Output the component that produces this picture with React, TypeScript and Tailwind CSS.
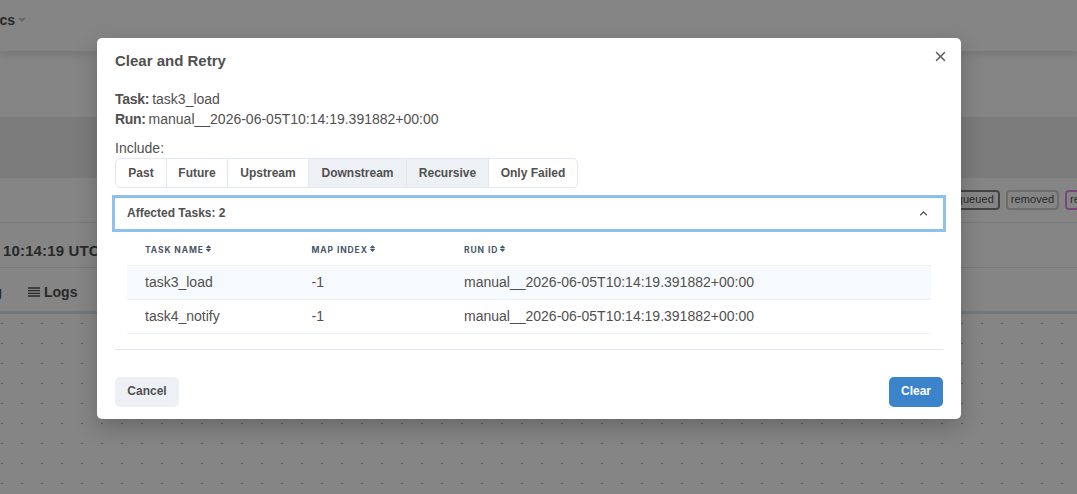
import React, { useState } from "react";
import { MdReorder } from "react-icons/md";
import { TiArrowUnsorted } from "react-icons/ti";
import clsx from "clsx";

const runId = "manual__2026-06-05T10:14:19.391882+00:00";

const tasks = [
  { name: "task3_load", mapIndex: -1, runId },
  { name: "task4_notify", mapIndex: -1, runId },
];

const options = [
  { label: "Past", width: "w-[50px]" },
  { label: "Future", width: "w-[61px]" },
  { label: "Upstream", width: "w-[81px]" },
  { label: "Downstream", width: "w-[98px]" },
  { label: "Recursive", width: "w-[82px]" },
  { label: "Only Failed", width: "w-[89px]" },
];

const CloseIcon: React.FC<{}> = () => (
  <svg
    viewBox="0 0 24 24"
    className="w-[9px] h-[9px] overflow-visible"
    fill="currentColor"
    stroke="currentColor"
  >
    <path d="M.439,21.44a1.5,1.5,0,0,0,2.122,2.121L11.823,14.3a.25.25,0,0,1,.354,0l9.262,9.263a1.5,1.5,0,1,0,2.122-2.121L14.3,12.177a.25.25,0,0,1,0-.354l9.263-9.262A1.5,1.5,0,0,0,21.439.44L12.177,9.7a.25.25,0,0,1-.354,0L2.561.44A1.5,1.5,0,0,0,.439,2.561L9.7,11.823a.25.25,0,0,1,0,.354Z" />
  </svg>
);

const ChevronIcon: React.FC<{ open: boolean }> = ({ open }) => (
  <svg
    viewBox="0 0 24 24"
    className={clsx("w-[15px] h-[15px]", open && "rotate-180")}
    fill="currentColor"
  >
    <path d="M16.59 8.59L12 13.17 7.41 8.59 6 10l6 6 6-6z" />
  </svg>
);

const Page: React.FC<{}> = () => (
  <div className="flex flex-col h-full text-[#51504f]">
    <div className="flex items-center h-[51px] shrink-0 pb-[11px] font-bold text-sm shadow-[0_1px_10px_2px_rgba(0,0,0,0.13)]">
      <span className="w-[15px] flex justify-end whitespace-nowrap">Docs</span>
      <span className="ml-[3px] border-x-4 border-t-4 border-x-transparent border-t-[#cbc3cf]" />
    </div>
    <div className="h-[66px] shrink-0" />
    <div className="h-[61px] shrink-0 bg-[#edecec]" />
    <div className="flex items-start justify-end h-[45px] shrink-0 pt-3 border-b border-[#e2e8f0]">
      <div className="flex w-[130px] gap-1.5 text-[11px] leading-[15px] tracking-[0.1px]">
        <span className="flex justify-end w-[53px] shrink-0 h-5 px-1 border-2 border-[#808080] rounded">
          queued
        </span>
        <span className="flex justify-center w-[53px] shrink-0 h-5 border-2 border-[#d3d3d3] rounded">
          removed
        </span>
        <span className="shrink-0 h-5 px-[3px] border-2 border-[#ee82ee] rounded">
          restarting
        </span>
      </div>
    </div>
    <div className="flex items-center h-[45px] shrink-0 pt-3 pl-[3px] border-b border-[#e2e8f0] text-[15px] font-bold tracking-[0.15px]">
      10:14:19 UTC
    </div>
    <div className="flex items-center h-[46px] shrink-0 pt-1 border-b-[3px] border-[#dbe5ee] text-sm font-bold">
      <span className="w-0.5 flex justify-end">Log</span>
      <MdReorder className="w-4 h-4 ml-6" />
      <span className="ml-0.5">Logs</span>
    </div>
    <svg className="w-full grow">
      <pattern
        id="dots"
        x="1"
        y="9"
        width="20"
        height="20"
        patternUnits="userSpaceOnUse"
      >
        <rect width="2" height="1" fill="#b0b0b0" />
      </pattern>
      <rect width="100%" height="100%" fill="url(#dots)" />
    </svg>
  </div>
);

const TaskTable: React.FC<{}> = () => (
  <div className="mx-3 text-sm">
    <div className="grid grid-cols-[166.5px_152.5px_1fr] items-center h-[37px] pt-1.5 px-[18px] border-b border-[#edf2f7] font-['Inter',sans-serif] text-[8.5px] font-bold tracking-[0.9px] text-[#4a5568]">
      {["TASK NAME", "MAP INDEX", "RUN ID"].map((title) => (
        <div key={title} className="flex items-center">
          {title}
          <TiArrowUnsorted className="w-[9px] h-[9px] mb-0.5" />
        </div>
      ))}
    </div>
    {tasks.map((task, i) => (
      <div
        key={task.name}
        className={clsx(
          "grid grid-cols-[166.5px_152.5px_1fr] items-center h-[34px] pb-px px-[18px] border-b border-[#edf2f7]",
          i % 2 === 0 && "bg-[#f7fafc]"
        )}
      >
        <span>{task.name}</span>
        <span>{task.mapIndex}</span>
        <span>{task.runId}</span>
      </div>
    ))}
  </div>
);

const ClearModal: React.FC<{}> = () => {
  const [selected, setSelected] = useState(["Downstream", "Recursive"]);
  const [open, setOpen] = useState(true);

  const toggle = (option: string) =>
    setSelected(
      selected.includes(option)
        ? selected.filter((item) => item !== option)
        : [...selected, option]
    );

  return (
    <div className="relative flex flex-col w-[864px] h-[381px] px-[18px] bg-white rounded-[5px] text-sm leading-5 text-[#51504f] shadow-[0_8px_22px_rgba(0,0,0,0.22)]">
      <div className="pt-[13px] text-[15px] font-bold">Clear and Retry</div>
      <button className="absolute top-[14px] right-4">
        <CloseIcon />
      </button>
      <div className="mt-[18px]">
        <b className="-mr-px tracking-[-0.25px]">Task:</b> task3_load
      </div>
      <div>
        <b className="-mr-px tracking-[-0.3px]">Run:</b> {runId}
      </div>
      <div className="mt-[9px]">Include:</div>
      <div className="flex w-fit h-[30px] border border-[#e2e8f0] rounded-[5px] overflow-hidden text-xs font-bold">
        {options.map(({ label, width }) => (
          <button
            key={label}
            className={clsx(
              "pb-px whitespace-nowrap border-[#e2e8f0] not-first:border-l",
              width,
              selected.includes(label) && "bg-[#edf1f6]"
            )}
            onClick={() => toggle(label)}
          >
            {label}
          </button>
        ))}
      </div>
      <div className="mt-[9px] border-t border-[#e2e8f0]">
        <button
          className="flex items-center justify-between w-full h-[31px] px-3 text-xs font-bold shadow-[0_0_0_3px_rgba(66,153,225,0.6)]"
          onClick={() => setOpen(!open)}
        >
          <span className="pb-0.5">Affected Tasks: 2</span>
          <ChevronIcon open={open} />
        </button>
        {open && <TaskTable />}
      </div>
      <div className="mt-[15px] border-t border-[#e2e8f0]" />
      <div className="flex justify-between mt-[27px] text-xs font-bold">
        <button className="w-16 h-[30px] pb-[3px] bg-[#edf1f6] rounded-[5px]">
          Cancel
        </button>
        <button className="w-[54px] h-[30px] pb-[3px] bg-[#3b83cb] text-white rounded-[5px]">
          Clear
        </button>
      </div>
    </div>
  );
};

const App: React.FC<{}> = () => {
  return (
    <div className="relative h-[494px] overflow-hidden bg-white font-['Liberation_Sans',Arial,sans-serif]">
      <Page />
      <div className="absolute inset-0 flex items-start pt-[38px] pl-[97px] bg-black/48">
        <ClearModal />
      </div>
    </div>
  );
};

export default App;
